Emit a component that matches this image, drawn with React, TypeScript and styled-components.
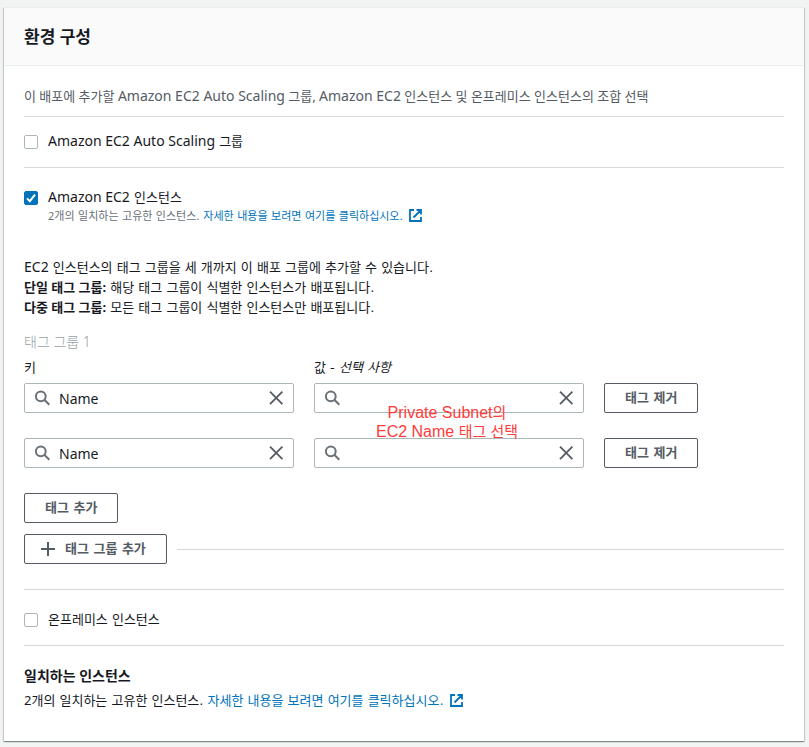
import React, { useState } from "react";
import styled, { createGlobalStyle } from "styled-components";

const latinStack = `"Noto Sans", "Noto Sans CJK KR", sans-serif`;
const hangulStack = `"DejaVu Sans", "Noto Sans CJK KR", sans-serif`;

const GlobalStyle = createGlobalStyle`
  *, *::before, *::after { box-sizing: border-box; }
  body {
    margin: 0;
    background: #f2f3f3;
    color: #16191f;
    font-family: ${hangulStack};
    font-size: 13px;
    line-height: 20px;
  }
`;

const Page = styled.main`
  padding: 7px 5px 6px 4px;
`;

const Card = styled.section`
  background: #ffffff;
  border-top: 1px solid #eaeded;
  box-shadow: 0 1px 1px 0 rgba(0, 28, 36, 0.3), 1px 1px 1px 0 rgba(0, 28, 36, 0.15),
    -1px 1px 1px 0 rgba(0, 28, 36, 0.15);
`;

const CardHeader = styled.header`
  padding: 19px 20px 18px;
  background: #fafafa;
  border-bottom: 1px solid #eaeded;
`;

const CardTitle = styled.h2`
  margin: 0;
  font-family: ${latinStack};
  font-size: 17px;
  line-height: 20px;
  font-weight: 700;
`;

const CardBody = styled.div`
  padding: 20px 20px 30px;
`;

const Latin = styled.span`
  font-family: ${latinStack};
  font-size: 14px;
  line-height: 14px;
`;

const Digit = styled.span`
  font-family: ${latinStack};
  line-height: 14px;
`;

const Intro = styled.p`
  margin: 0 0 10px;
  color: #545b64;
  font-family: ${latinStack};
`;

const Option = styled.div<{ $top: number; $bottom: number }>`
  padding: ${(p) => p.$top}px 0 ${(p) => p.$bottom}px;
  border-top: 1px solid #d5dbdb;
`;

const OptionLabel = styled.label`
  display: flex;
  align-items: center;
  gap: 10px;
`;

const CheckFrame = styled.span`
  display: grid;
  width: 14px;
  height: 14px;
  > * {
    grid-area: 1 / 1;
  }
  > svg {
    pointer-events: none;
  }
`;

const CheckInput = styled.input`
  appearance: none;
  width: 14px;
  height: 14px;
  margin: 0;
  background: #ffffff;
  border: 1px solid #aab7b8;
  border-radius: 2px;
  &:checked {
    background: #0073bb;
    border-color: #0073bb;
  }
`;

const OptionNote = styled.p`
  margin: 0 0 0 24px;
  color: #687078;
  font-size: 11px;
  line-height: 18px;
`;

const Link = styled.a`
  color: #0073bb;
  text-decoration: none;
  > svg {
    margin-left: 6px;
    vertical-align: -2px;
  }
`;

const Help = styled.p`
  margin: 32px 0 14px;
`;

const Term = styled.strong`
  font-family: ${latinStack};
  font-weight: 700;
  line-height: 14px;
`;

const GroupTitle = styled.h3`
  margin: 0 0 6px;
  color: #95a2a4;
  font-family: ${latinStack};
  font-size: 14px;
  line-height: 20px;
  font-weight: 300;
`;

const TagGrid = styled.div`
  position: relative;
  display: grid;
  grid-template-columns: 3fr 3fr 2fr;
  column-gap: 20px;
  row-gap: 25px;
  margin-bottom: 25px;
`;

const FieldLabels = styled.div`
  display: grid;
  grid-template-columns: 3fr 3fr 2fr;
  column-gap: 20px;
  margin-bottom: 5px;
`;

const SearchBox = styled.div`
  display: flex;
  align-items: center;
  height: 30px;
  padding: 0 9px;
  border: 1px solid #aab7b8;
  border-radius: 2px;
  background: #ffffff;
`;

const SearchInput = styled.input`
  flex: 1;
  min-width: 0;
  padding: 1px 9px 0;
  border: 0;
  outline: 0;
  background: transparent;
  color: #16191f;
  font-family: ${latinStack};
  font-size: 14px;
`;

const ClearButton = styled.button`
  display: flex;
  padding: 0;
  border: 0;
  background: none;
  cursor: pointer;
`;

const Button = styled.button`
  display: inline-flex;
  align-items: center;
  justify-self: start;
  gap: 9px;
  height: 30px;
  padding: 0 20px;
  border: 1px solid #545b64;
  border-radius: 2px;
  background: #ffffff;
  color: #545b64;
  font: inherit;
  font-weight: 700;
  cursor: pointer;
`;

const GroupButton = styled(Button)`
  padding: 0 20px 0 15px;
`;

const Annotation = styled.div`
  position: absolute;
  left: 315px;
  right: 229px;
  top: 20px;
  color: #ff3b3b;
  font-family: "Liberation Sans", "Noto Sans CJK KR", sans-serif;
  font-size: 16px;
  line-height: 19px;
  text-align: center;
  pointer-events: none;
`;

const Hangul = styled.span`
  font-size: 15px;
`;

const AddGroupRow = styled.div`
  display: flex;
  align-items: center;
  gap: 10px;
  margin: 11px 0 25px;
`;

const Rule = styled.hr`
  flex: 1;
  margin: 0;
  border: 0;
  border-top: 1px solid #d5dbdb;
`;

const ResultTitle = styled.h3`
  margin: 0 0 5px;
  font-family: ${latinStack};
  font-size: 14px;
  line-height: 20px;
  font-weight: 700;
`;

const Result = styled.p`
  margin: 0;
`;

const SearchIcon = () => (
  <svg width="16" height="16" viewBox="0 0 16 16" fill="none" stroke="#687078" strokeWidth="2" aria-hidden="true">
    <circle cx="6.8" cy="6.3" r="4.9" />
    <path d="M10.3 9.8l5 5" />
  </svg>
);

const CloseIcon = () => (
  <svg width="16" height="16" viewBox="0 0 16 16" fill="none" stroke="#545b64" strokeWidth="1.8" aria-hidden="true">
    <path d="M2 1.7l12.4 12.4M14.4 1.7L2 14.1" />
  </svg>
);

const PlusIcon = () => (
  <svg width="16" height="16" viewBox="0 0 16 16" fill="none" stroke="#545b64" strokeWidth="2" aria-hidden="true">
    <path d="M8 1v14M1 8h14" />
  </svg>
);

const ExternalIcon = () => (
  <svg width="13" height="13" viewBox="0 0 13 13" fill="none" stroke="#0073bb" strokeWidth="1.8" aria-hidden="true">
    <path d="M5 1H1v11h11V8M7.5 1H12v4.5M12 1L4.5 8.5" />
  </svg>
);

type CheckboxProps = { defaultChecked?: boolean; children: React.ReactNode };

const Checkbox = ({ defaultChecked = false, children }: CheckboxProps) => {
  const [checked, setChecked] = useState(defaultChecked);
  return (
    <OptionLabel>
      <CheckFrame>
        <CheckInput type="checkbox" checked={checked} onChange={(e) => setChecked(e.target.checked)} />
        {checked && (
          <svg width="14" height="14" viewBox="0 0 14 14" fill="none" stroke="#ffffff" strokeWidth="2" aria-hidden="true">
            <path d="M3 7.4l2.8 2.8L11 3.6" />
          </svg>
        )}
      </CheckFrame>
      <span>{children}</span>
    </OptionLabel>
  );
};

type SearchFieldProps = { id: string; label: string; initial?: string };

const SearchField = ({ id, label, initial = "" }: SearchFieldProps) => {
  const [value, setValue] = useState(initial);
  return (
    <SearchBox>
      <SearchIcon />
      <SearchInput id={id} aria-label={label} type="text" value={value} onChange={(e) => setValue(e.target.value)} />
      <ClearButton type="button" aria-label="지우기" onClick={() => setValue("")}>
        <CloseIcon />
      </ClearButton>
    </SearchBox>
  );
};

const DetailsLink = () => (
  <Link href="#instances">
    자세한 내용을 보려면 여기를 클릭하십시오.
    <ExternalIcon />
  </Link>
);

export default function App() {
  return (
    <>
      <GlobalStyle />
      <Page>
        <Card>
          <CardHeader>
            <CardTitle>환경 구성</CardTitle>
          </CardHeader>
          <CardBody>
            <Intro>
              이 배포에 추가할 <Latin>Amazon EC2 Auto Scaling</Latin> 그룹, <Latin>Amazon EC2</Latin> 인스턴스 및
              온프레미스 인스턴스의 조합 선택
            </Intro>
            <Option $top={15} $bottom={15}>
              <Checkbox>
                <Latin>Amazon EC2 Auto Scaling</Latin> 그룹
              </Checkbox>
            </Option>
            <Option $top={20} $bottom={0}>
              <Checkbox defaultChecked>
                <Latin>Amazon EC2</Latin> 인스턴스
              </Checkbox>
              <OptionNote>
                <Digit>2</Digit>개의 일치하는 고유한 인스턴스. <DetailsLink />
              </OptionNote>
              <Help>
                <Latin>EC2</Latin> 인스턴스의 태그 그룹을 세 개까지 이 배포 그룹에 추가할 수 있습니다.
                <br />
                <Term>단일 태그 그룹:</Term> 해당 태그 그룹이 식별한 인스턴스가 배포됩니다.
                <br />
                <Term>다중 태그 그룹:</Term> 모든 태그 그룹이 식별한 인스턴스만 배포됩니다.
              </Help>
              <GroupTitle>태그 그룹 1</GroupTitle>
              <FieldLabels>
                <label htmlFor="key-1">키</label>
                <label htmlFor="value-1">
                  값 - <em>선택 사항</em>
                </label>
              </FieldLabels>
              <TagGrid>
                <SearchField id="key-1" label="키" initial="Name" />
                <SearchField id="value-1" label="값" />
                <Button type="button">태그 제거</Button>
                <SearchField id="key-2" label="키" initial="Name" />
                <SearchField id="value-2" label="값" />
                <Button type="button">태그 제거</Button>
                <Annotation>
                  Private Subnet<Hangul>의</Hangul>
                  <br />
                  EC2 Name <Hangul>태그 선택</Hangul>
                </Annotation>
              </TagGrid>
              <Button type="button">태그 추가</Button>
              <AddGroupRow>
                <GroupButton type="button">
                  <PlusIcon />
                  태그 그룹 추가
                </GroupButton>
                <Rule />
              </AddGroupRow>
            </Option>
            <Option $top={20} $bottom={15}>
              <Checkbox>온프레미스 인스턴스</Checkbox>
            </Option>
            <Option $top={20} $bottom={0}>
              <ResultTitle>일치하는 인스턴스</ResultTitle>
              <Result>
                <Digit>2</Digit>개의 일치하는 고유한 인스턴스. <DetailsLink />
              </Result>
            </Option>
          </CardBody>
        </Card>
      </Page>
    </>
  );
}
